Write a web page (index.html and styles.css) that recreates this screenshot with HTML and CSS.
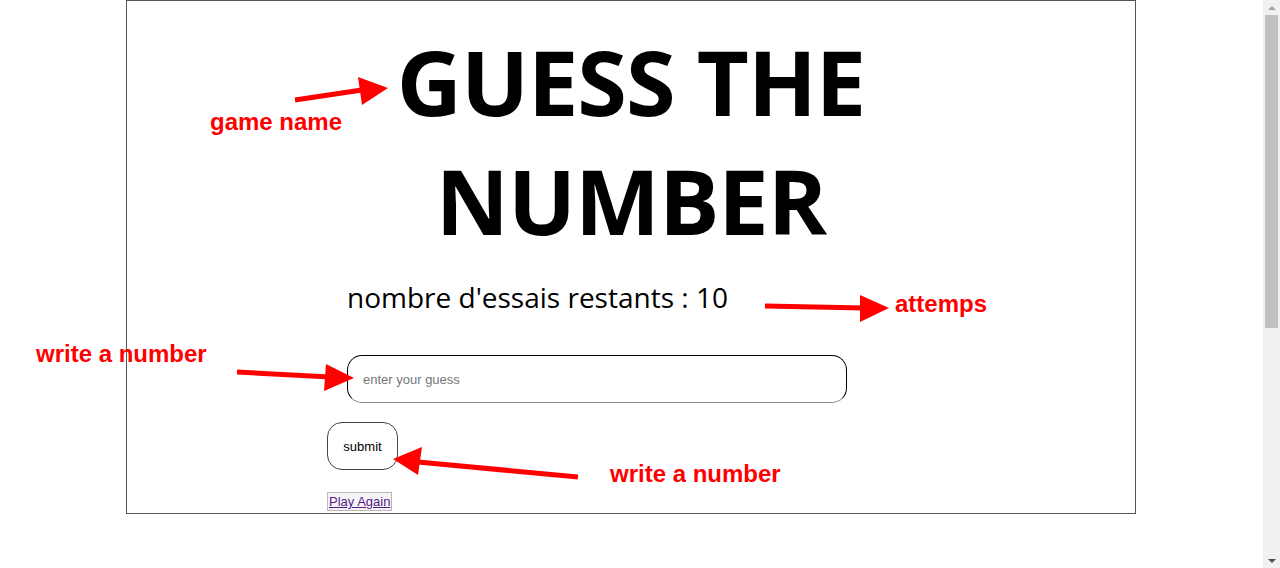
FILE: index.html
```html
<!DOCTYPE html>
<html lang="en">
<head>
<meta charset="utf-8">
<title>Guess the number</title>
<link rel="stylesheet" href="styles.css">
</head>
<body>
<div class="page">
  <main class="game">
    <h1 class="title">GUESS THE NUMBER</h1>
    <div class="content">
      <p class="attempts">nombre d'essais restants : 10</p>
      <input class="guess" type="text" placeholder="enter your guess">
      <button class="submit" type="button">submit</button>
      <button class="again" type="button"><a href="#">Play Again</a></button>
    </div>
  </main>

  <div class="notes">
    <svg class="arrows" width="1263" height="568" viewBox="0 0 1263 568">
      <g stroke="#ff0000" stroke-width="5" fill="none">
        <line x1="295" y1="100" x2="362" y2="90"/>
        <line x1="765" y1="306" x2="864" y2="308"/>
        <line x1="237" y1="372" x2="330" y2="377"/>
        <line x1="578" y1="477" x2="418" y2="462"/>
      </g>
      <g fill="#ff0000">
        <polygon points="388,88 358,77 362,105"/>
        <polygon points="889,308 860,295 860,322"/>
        <polygon points="354,378 326,364 324,391"/>
        <polygon points="393,459 422,447 418,475"/>
      </g>
    </svg>
    <span class="note note-game">game name</span>
    <span class="note note-attempts">attemps</span>
    <span class="note note-write1">write a number</span>
    <span class="note note-write2">write a number</span>
  </div>
</div>

<div class="scrollbar">
  <div class="sb-btn sb-up"><span class="tri-up"></span></div>
  <div class="sb-track"><div class="sb-thumb"></div></div>
  <div class="sb-btn sb-down"><span class="tri-down"></span></div>
</div>
</body>
</html>
```
FILE: styles.css
```css
html, body {
  margin: 0;
  padding: 0;
  overflow: hidden;
}
body {
  width: 1280px;
  height: 568px;
  background: #ffffff;
  font-family: "Open Sans", "Noto Sans", sans-serif;
}
.page {
  position: relative;
  width: 1263px;
  height: 568px;
  padding-left: 126px;
  box-sizing: border-box;
}
.game {
  width: 1008px;
  height: 512px;
  border: 1px solid #555555;
}
.title {
  margin: 21px auto 0;
  max-width: 620px;
  font-size: 90px;
  line-height: 119px;
  font-weight: 700;
  text-align: center;
  color: #000;
  letter-spacing: -1px;
}
.content {
  padding-left: 200px;
  display: flex;
  flex-direction: column;
  align-items: flex-start;
}
.attempts {
  margin: 18px 0 0 20px;
  font-size: 28px;
  line-height: 38px;
  color: #000;
}
.guess {
  margin: 39px 0 0 20px;
  width: 500px;
  height: 48px;
  box-sizing: border-box;
  border: 1px solid #000;
  border-bottom-color: #888;
  border-radius: 15px;
  padding: 0 15px;
  font-family: "Liberation Sans", Arial, sans-serif;
  font-size: 13px;
  outline: none;
}
.guess::placeholder {
  color: #777;
}
.submit {
  margin-top: 19px;
  width: 71px;
  height: 48px;
  border: 1px solid #444;
  border-radius: 15px;
  background: #fff;
  font-family: "Liberation Sans", Arial, sans-serif;
  font-size: 13px;
  color: #000;
  padding: 0;
}
.again {
  margin-top: 22px;
  padding: 0 1px;
  border: 1px solid #b8b8b8;
  background: #f5f5f5;
  font-family: "Liberation Sans", Arial, sans-serif;
  font-size: 13px;
  line-height: 17px;
  height: 19px;
  border-radius: 0;
}
.again a {
  color: #551a8b;
  text-decoration: underline;
}
.notes {
  position: absolute;
  left: 0;
  top: 0;
  width: 1263px;
  height: 568px;
  pointer-events: none;
}
.arrows {
  position: absolute;
  left: 0;
  top: 0;
}
.note {
  position: absolute;
  font-family: "Liberation Sans", Arial, sans-serif;
  font-weight: 700;
  font-size: 24px;
  line-height: 28px;
  color: #ff0000;
  white-space: nowrap;
}
.note-game { left: 210px; top: 108px; }
.note-attempts { left: 895px; top: 290px; }
.note-write1 { left: 36px; top: 340px; }
.note-write2 { left: 610px; top: 460px; }

.scrollbar {
  position: fixed;
  right: 0;
  top: 0;
  width: 17px;
  height: 568px;
  background: #f1f1f1;
  display: flex;
  flex-direction: column;
}
.sb-btn {
  height: 15px;
  display: flex;
  align-items: center;
  justify-content: center;
}
.sb-track {
  flex: 1;
  padding: 0 2px;
}
.sb-thumb {
  height: 313px;
  background: #c1c1c1;
}
.tri-up {
  width: 0;
  height: 0;
  border-left: 4px solid transparent;
  border-right: 4px solid transparent;
  border-bottom: 4px solid #a3a3a3;
}
.tri-down {
  width: 0;
  height: 0;
  border-left: 4px solid transparent;
  border-right: 4px solid transparent;
  border-top: 4px solid #505050;
}
```
